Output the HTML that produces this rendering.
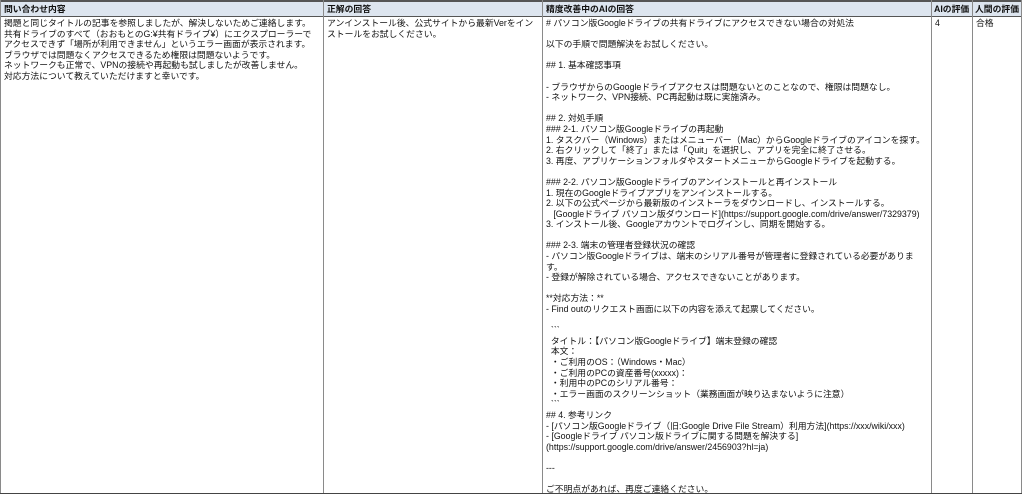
<!DOCTYPE html>
<html><head><meta charset="utf-8"><style>
html,body{margin:0;padding:0;background:#fff;width:1024px;height:496px;overflow:hidden;position:relative}
body{font-family:"Liberation Sans","Noto Sans CJK JP",sans-serif;font-size:8.8px;color:#111}
.hd{position:absolute;left:0;top:0;width:1021px;height:14px;background:#dde5ef;border-top:2px solid #555;border-bottom:1px solid #555}
.v{position:absolute;top:0;width:1px;height:494px;background:#8a8a8a}
.bot{position:absolute;left:0;top:493px;width:1022px;height:1px;background:#444}
.h{position:absolute;top:3px;font-weight:bold;line-height:12px;white-space:nowrap}
.t{position:absolute;top:18px;white-space:pre;line-height:10.6px}
</style></head><body>
<div class="hd"></div>
<div class="v" style="left:0"></div>
<div class="v" style="left:323px"></div>
<div class="v" style="left:542px"></div>
<div class="v" style="left:931px"></div>
<div class="v" style="left:972px"></div>
<div class="v" style="left:1021px"></div>
<div class="bot"></div>
<div class="h" style="left:4px">問い合わせ内容</div>
<div class="h" style="left:327px">正解の回答</div>
<div class="h" style="left:546px">精度改善中のAIの回答</div>
<div class="h" style="left:934px">AIの評価</div>
<div class="h" style="left:975px">人間の評価</div>
<div class="t" style="left:4px">掲題と同じタイトルの記事を参照しましたが、解決しないためご連絡します。
共有ドライブのすべて（おおもとのG:¥共有ドライブ¥）にエクスプローラーで
アクセスできず「場所が利用できません」というエラー画面が表示されます。
ブラウザでは問題なくアクセスできるため権限は問題ないようです。
ネットワークも正常で、VPNの接続や再起動も試しましたが改善しません。
対応方法について教えていただけますと幸いです。</div>
<div class="t" style="left:327px">アンインストール後、公式サイトから最新Verをイン
ストールをお試しください。</div>
<div class="t" style="left:546px"># パソコン版Googleドライブの共有ドライブにアクセスできない場合の対処法

以下の手順で問題解決をお試しください。

## 1. 基本確認事項

- ブラウザからのGoogleドライブアクセスは問題ないとのことなので、権限は問題なし。
- ネットワーク、VPN接続、PC再起動は既に実施済み。

## 2. 対処手順
### 2-1. パソコン版Googleドライブの再起動
1. タスクバー（Windows）またはメニューバー（Mac）からGoogleドライブのアイコンを探す。
2. 右クリックして「終了」または「Quit」を選択し、アプリを完全に終了させる。
3. 再度、アプリケーションフォルダやスタートメニューからGoogleドライブを起動する。

### 2-2. パソコン版Googleドライブのアンインストールと再インストール
1. 現在のGoogleドライブアプリをアンインストールする。
2. 以下の公式ページから最新版のインストーラをダウンロードし、インストールする。
   [Googleドライブ パソコン版ダウンロード](https://support.google.com/drive/answer/7329379)
3. インストール後、Googleアカウントでログインし、同期を開始する。

### 2-3. 端末の管理者登録状況の確認
- パソコン版Googleドライブは、端末のシリアル番号が管理者に登録されている必要がありま
す。
- 登録が解除されている場合、アクセスできないことがあります。

**対応方法：**
- Find outのリクエスト画面に以下の内容を添えて起票してください。

  &#96;&#96;&#96;
  タイトル：【パソコン版Googleドライブ】端末登録の確認
  本文：
  ・ご利用のOS：（Windows・Mac）
  ・ご利用のPCの資産番号(xxxxx)：
  ・利用中のPCのシリアル番号：
  ・エラー画面のスクリーンショット（業務画面が映り込まないように注意）
  &#96;&#96;&#96;
## 4. 参考リンク
- [パソコン版Googleドライブ（旧:Google Drive File Stream）利用方法](https://xxx/wiki/xxx)
- [Googleドライブ パソコン版ドライブに関する問題を解決する]
(https://support.google.com/drive/answer/2456903?hl=ja)

---

ご不明点があれば、再度ご連絡ください。</div>
<div class="t" style="left:935px">4</div>
<div class="t" style="left:976px">合格</div>
</body></html>
